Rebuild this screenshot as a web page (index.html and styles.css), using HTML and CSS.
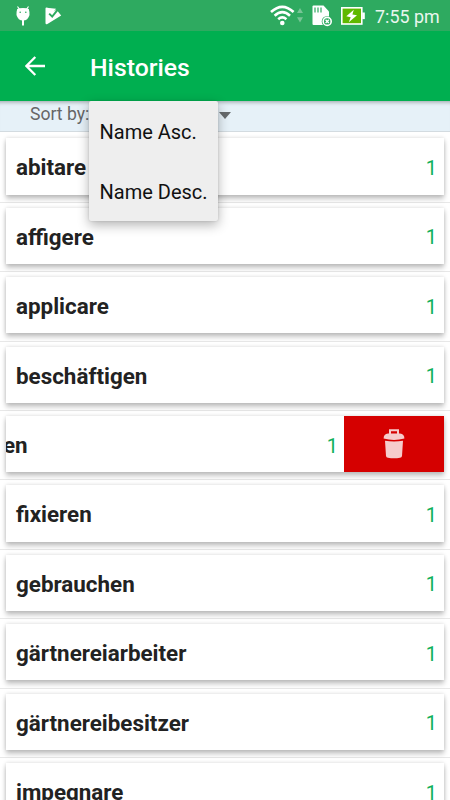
FILE: index.html
```html
<!DOCTYPE html>
<html lang="en">
<head>
    <meta charset="UTF-8">
    <meta name="viewport" content="width=device-width, initial-scale=1.0">
    <title>Histories</title>
    <link rel="stylesheet" href="styles.css">
</head>
<body>

    <div class="status-bar">
        <svg class="icon-bug" width="14" height="20" viewBox="0 0 14 20">
            <path d="M1.5 0.5L4 4M12.5 0.5L10 4" stroke="#fff" stroke-width="1.2"/>
            <path d="M1.2 3Q0.3 6 0.5 9Q2 14.5 7 14.5Q12 14.5 13.5 9Q13.7 6 12.8 3Q11 2 7 2Q3 2 1.2 3z" fill="#fff"/>
            <path d="M7 14v5.5" stroke="#fff" stroke-width="2"/>
            <circle cx="4.2" cy="6.2" r="0.8" fill="#2eaa60"/>
            <circle cx="9.8" cy="6.2" r="0.8" fill="#2eaa60"/>
        </svg>
        <svg class="icon-play" width="17" height="18" viewBox="0 0 17 18">
            <path d="M1.5 0.5L4.8 1.3L7.8 5L11.5 2.8L16.2 8.6L2 17.2Q0.5 17.5 0.5 16V1.5Q0.5 0.5 1.5 0.5z" fill="#fff"/>
            <path d="M4 1L11 1.8L7.5 6.5z" fill="#fff"/>
            <path d="M4.2 6.6L7.2 9.6L13.2 2.2" fill="none" stroke="#2eaa60" stroke-width="2"/>
        </svg>
        <span class="spacer"></span>
        <svg class="icon-wifi" width="34" height="21" viewBox="0 0 34 21">
            <g fill="none" stroke="#fff" stroke-width="2.6">
                <path d="M1 7Q12.3 -3.4 23.6 7"/>
                <path d="M4.6 10.7Q12.3 3.6 20 10.7"/>
                <path d="M8.2 14.3Q12.3 10.6 16.4 14.3"/>
            </g>
            <circle cx="12.3" cy="18" r="2.3" fill="#fff"/>
            <path d="M27 8L30 3L33 8zM27 12.3L30 17.5L33 12.3z" fill="#78c596"/>
        </svg>
        <svg class="icon-card" width="21" height="22" viewBox="0 0 21 22">
            <path d="M1.5 0.5H11.5L17 6.5V20H1.5Q0.5 20 0.5 19V1.5Q0.5 0.5 1.5 0.5z" fill="#fff"/>
            <path d="M3 2.5v5M6 2.5v5M9 2.5v5" stroke="#2eaa60" stroke-width="1.2"/>
            <circle cx="15.2" cy="16.4" r="5.5" fill="#2eaa60"/>
            <circle cx="15.2" cy="16.4" r="4" fill="none" stroke="#fff" stroke-width="1.6"/>
            <path d="M13.6 14.8l3.2 3.2M16.8 14.8l-3.2 3.2" stroke="#fff" stroke-width="1.3"/>
        </svg>
        <svg class="icon-battery" width="24" height="18" viewBox="0 0 24 18">
            <rect x="0.8" y="0.8" width="20" height="16.2" fill="#5fb800" stroke="#fff" stroke-width="1.6"/>
            <rect x="21.2" y="5.5" width="2.6" height="6.6" fill="#fff"/>
            <path d="M12.8 2.8L5.3 9.3L9.7 10.3L7.8 15.2L16 8.3L11.4 7.4z" fill="#fff"/>
        </svg>
        <span class="clock">7:55 pm</span>
    </div>

    <div class="app-bar">
        <svg class="icon-back" width="20" height="20" viewBox="0 0 20 20">
            <path d="M20 10H1.6M10.3 1L1.4 10L10.3 19" fill="none" stroke="#fff" stroke-width="2.3"/>
        </svg>
        <h1>Histories</h1>
    </div>

    <div class="sort-bar">
        <span class="sort-label">Sort by:</span>
        <span class="sort-arrow"></span>
        <div class="sort-menu">
            <div class="sort-option">Name Asc.</div>
            <div class="sort-option">Name Desc.</div>
        </div>
    </div>

    <div class="list">
        <div class="row"><div class="card"><span class="word">abitare</span><span class="count">1</span></div></div>
        <div class="row"><div class="card"><span class="word">affigere</span><span class="count">1</span></div></div>
        <div class="row"><div class="card"><span class="word">applicare</span><span class="count">1</span></div></div>
        <div class="row"><div class="card"><span class="word">beschäftigen</span><span class="count">1</span></div></div>
        <div class="row">
            <div class="card swiped">
                <span class="word">en</span><span class="count">1</span>
                <div class="delete">
                    <svg width="22" height="30" viewBox="0 0 22 30">
                        <path d="M7 5V1.2H15V5" fill="none" stroke="#f6cccc" stroke-width="2"/>
                        <path d="M0.6 9.5Q0.6 5.2 5 4.6H17Q21.4 5.2 21.4 9.5Q11 12.3 0.6 9.5z" fill="#f6cccc"/>
                        <path d="M2 11.8Q11 13.3 20 11.8L19 27Q18.8 28.6 17 28.8Q11 29.8 5 28.8Q3.2 28.6 3 27z" fill="#f6cccc"/>
                    </svg>
                </div>
            </div>
        </div>
        <div class="row"><div class="card"><span class="word">fixieren</span><span class="count">1</span></div></div>
        <div class="row"><div class="card"><span class="word">gebrauchen</span><span class="count">1</span></div></div>
        <div class="row"><div class="card"><span class="word">gärtnereiarbeiter</span><span class="count">1</span></div></div>
        <div class="row"><div class="card"><span class="word">gärtnereibesitzer</span><span class="count">1</span></div></div>
        <div class="row"><div class="card"><span class="word">impegnare</span><span class="count">1</span></div></div>
    </div>

</body>
</html>
```
FILE: styles.css
```css
* {
    box-sizing: border-box;
}
body {
    margin: 0;
    height: 800px;
    overflow: hidden;
    display: flex;
    flex-direction: column;
    font-family: Roboto, sans-serif;
    background-color: #fff;
}
svg {
    display: block;
    flex: none;
}
.status-bar {
    flex: none;
    height: 31px;
    display: flex;
    align-items: center;
    padding: 0 11px 0 16px;
    background-color: #2eaa60;
    position: relative;
    z-index: 3;
}
.icon-play {
    margin-left: 15px;
}
.spacer {
    flex: 1;
}
.icon-card {
    margin-left: 8px;
}
.icon-battery {
    margin-left: 8px;
}
.clock {
    width: 64px;
    margin-left: 10px;
    padding-top: 2px;
    font-size: 17.9px;
    color: #e9f6ee;
    white-space: nowrap;
}
.app-bar {
    flex: none;
    height: 70px;
    display: flex;
    align-items: center;
    padding-left: 25px;
    background-color: #00af50;
    box-shadow: 0 1px 5px rgba(0, 0, 0, 0.4);
    position: relative;
    z-index: 1;
}
.app-bar h1 {
    margin: 2px 0 0 45px;
    font-size: 24.8px;
    font-weight: 500;
    color: #fff;
}
.sort-bar {
    flex: none;
    height: 31px;
    display: flex;
    position: relative;
    z-index: 2;
    padding-left: 30px;
    border-bottom: 1px solid #d3dbe0;
}
.sort-bar::before {
    content: "";
    position: absolute;
    inset: 0;
    background-color: #e6f1f8;
    box-shadow: inset 0 5px 4px -4px rgba(0, 0, 0, 0.35);
}
.sort-label {
    position: relative;
    width: 60px;
    margin-top: 3px;
    font-size: 17.6px;
    line-height: 21px;
    color: #666;
}
.sort-arrow {
    position: relative;
    width: 12px;
    height: 7px;
    margin: 11px 0 0 129px;
    background-color: #666a6c;
    clip-path: polygon(0 0, 100% 0, 50% 100%);
}
/* The menu opens over the sort bar and the first rows */
.sort-menu {
    position: absolute;
    top: 0;
    left: 89px;
    width: 129px;
    background-color: #eee;
    border-radius: 2px;
    box-shadow: 0 4px 12px rgba(0, 0, 0, 0.3), 0 0 2px rgba(0, 0, 0, 0.15);
}
.sort-option {
    height: 60px;
    padding-left: 10.5px;
    font-size: 20px;
    line-height: 63px;
    color: #111;
    white-space: nowrap;
}
.list {
    flex: 1;
    min-height: 0;
    padding-top: 1.4px;
    overflow: hidden;
}
.row {
    height: 69.4px;
    padding: 5px 6px 0;
    border-bottom: 1px solid #e8e8e8;
}
.card {
    height: 56.2px;
    display: flex;
    align-items: center;
    justify-content: space-between;
    padding: 0 7px 0 10px;
    background-color: #fff;
    box-shadow: 0 4px 5px rgba(0, 0, 0, 0.22), 0 0 4px rgba(0, 0, 0, 0.15);
}
.word {
    padding-top: 2px;
    font-size: 22.4px;
    font-weight: 700;
    color: #222;
}
.count {
    padding-top: 3px;
    font-size: 20px;
    color: #0fb05a;
}
.swiped {
    padding: 0;
}
.swiped .word {
    flex: 1;
    margin-left: -3px;
    clip-path: inset(0 0 0 3px);
}
.delete {
    width: 100px;
    height: 100%;
    margin-left: 6px;
    display: flex;
    align-items: center;
    justify-content: center;
    background-color: #d50000;
}
```
